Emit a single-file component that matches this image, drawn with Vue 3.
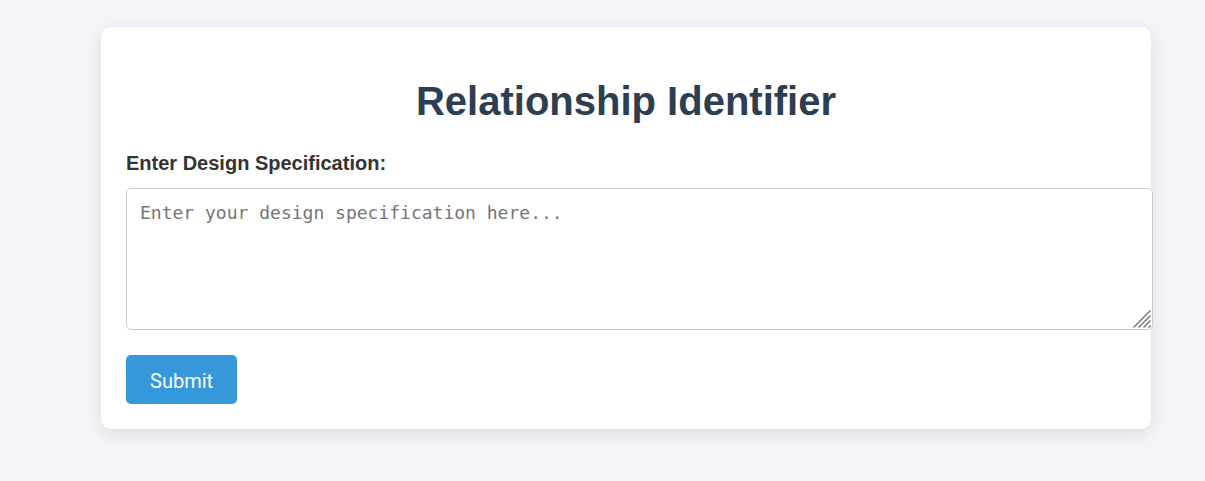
<script setup>
import { ref } from 'vue'
const spec = ref('')
</script>

<template>
  <main class="page">
    <div class="card">
      <h1 class="title">Relationship Identifier</h1>
      <form class="form" @submit.prevent>
        <label class="label" for="spec">Enter Design Specification:</label>
        <div class="field">
          <textarea id="spec" v-model="spec" class="input" placeholder="Enter your design specification here..."></textarea>
          <svg class="grip" viewBox="0 0 18 18" aria-hidden="true">
            <path d="M0.5 17.5L17.5 0.5M5.5 17.5L17.5 5.5M10.5 17.5L17.5 10.5M15.5 17.5L17.5 15.5" />
          </svg>
        </div>
        <button class="submit" type="submit">Submit</button>
      </form>
    </div>
  </main>
</template>

<style>
body {
  background: #f4f4f9;
}
</style>

<style scoped>
.page {
  padding: 27px 54px 52px 101px;
  font-family: "Liberation Sans", Arial, sans-serif;
  color: #333;
}
.card {
  padding: 50px 25px 25px;
  background: #fff;
  border-radius: 10px;
  box-shadow: 0 5px 19px rgba(0, 0, 0, 0.1);
}
.title {
  margin: 0 0 24px;
  font-size: 40px;
  line-height: 48px;
  text-align: center;
  color: #2c3e50;
}
.form {
  display: flex;
  flex-direction: column;
  align-items: flex-start;
}
.label {
  margin-bottom: 10px;
  font-size: 20px;
  line-height: 29px;
  font-weight: bold;
}
.field {
  position: relative;
  align-self: stretch;
  margin-right: -27px;
  margin-bottom: 25px;
}
.input {
  display: block;
  box-sizing: border-box;
  width: 100%;
  height: 142px;
  padding: 12px 13px;
  border: 1px solid #ccc;
  border-radius: 5px;
  background: #fff;
  font-family: "DejaVu Sans Mono", monospace;
  font-size: 18px;
  line-height: 24px;
  resize: none;
}
.input::placeholder {
  color: #757575;
}
.grip {
  position: absolute;
  right: 2px;
  bottom: 2px;
  width: 18px;
  height: 18px;
  fill: none;
  stroke: #777;
  stroke-width: 1.5;
}
.submit {
  padding: 14px 24px 10px;
  border: 0;
  border-radius: 5px;
  background: #3498db;
  color: #fff;
  font-family: Roboto, sans-serif;
  font-size: 20px;
  line-height: 25px;
}
</style>
